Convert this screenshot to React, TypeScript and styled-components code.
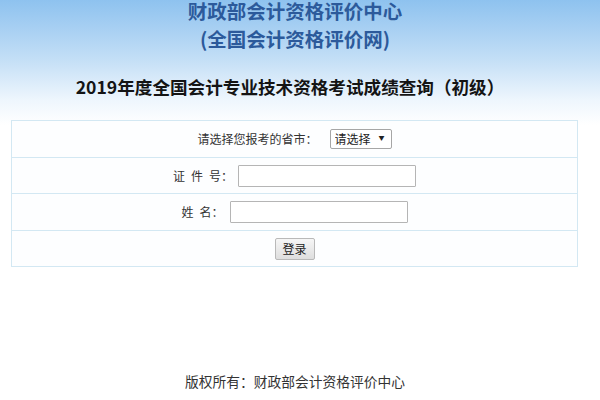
import React from "react";
import styled, { createGlobalStyle } from "styled-components";

const Global = createGlobalStyle`
  html, body { margin: 0; padding: 0; background: #ffffff; }
  body { font-family: "Noto Sans CJK SC", "Noto Sans", sans-serif; width: 600px; height: 400px; overflow: hidden; }
`;

const Page = styled.div`
  width: 600px;
  height: 400px;
  display: flex;
  flex-direction: column;
  background: linear-gradient(to bottom, #8ec2ef 0px, #c4dff6 60px, #eef6fd 100px, #ffffff 125px, #ffffff 400px);
`;

const Header = styled.header`
  display: flex;
  flex-direction: column;
  align-items: center;
  height: 120px;
  padding-right: 10px;
`;

const OrgTitle = styled.div<{ $gap?: number }>`
  font-size: 19.5px;
  line-height: 22px;
  font-weight: 700;
  color: #2c5a9b;
  white-space: nowrap;
  margin-top: ${(p) => p.$gap ?? 0}px;
`;

const Heading = styled.h1`
  margin: 27px 10px 0 0;
  font-size: 17.6px;
  line-height: 20px;
  font-weight: 700;
  color: #141414;
  white-space: nowrap;
`;

const Table = styled.div`
  margin: 0 22px 0 11px;
  border: 1px solid #d3e8f3;
  background: #fdfeff;
  display: flex;
  flex-direction: column;
`;

const Row = styled.div<{ $h: number; $shift?: number }>`
  height: ${(p) => p.$h}px;
  display: flex;
  align-items: center;
  justify-content: center;
  gap: ${(p) => p.$shift ?? 8}px;
  border-top: 1px solid #d3e8f3;
  &:first-child { border-top: none; }
`;

const Label = styled.span`
  font-size: 12px;
  color: #333;
  white-space: pre;
  line-height: 14px;
`;

const SelectWrap = styled.span`
  position: relative;
  display: inline-flex;
`;

const Select = styled.select`
  appearance: none;
  -webkit-appearance: none;
  width: 62px;
  height: 20px;
  border: 1px solid #a6a6a6;
  border-radius: 2px;
  background: #ffffff;
  font-family: "Noto Sans CJK SC", sans-serif;
  font-size: 12px;
  color: #222;
  padding: 0 0 0 4px;
  line-height: 18px;
`;

const Arrow = styled.span`
  position: absolute;
  right: 7px;
  top: 5px;
  font-size: 6px;
  line-height: 8px;
  color: #222;
  pointer-events: none;
`;

const Input = styled.input`
  width: 178px;
  height: 22px;
  box-sizing: border-box;
  border: 1px solid #b5b5b5;
  border-radius: 1px;
  background: #fff;
  padding: 0 3px;
`;

const Button = styled.button`
  width: 40px;
  height: 22px;
  box-sizing: border-box;
  border: 1px solid #b9b9b9;
  border-radius: 2px;
  background: linear-gradient(#f6f6f6, #dedede);
  font-family: "Noto Sans CJK SC", sans-serif;
  font-size: 12px;
  color: #222;
  padding: 0;
`;

const Footer = styled.footer`
  margin-top: 106px;
  text-align: center;
  font-size: 13.75px;
  line-height: 16px;
  color: #333;
  padding-right: 10px;
`;

export default function App() {
  return (
    <Page>
      <Global />
      <Header>
        <OrgTitle>财政部会计资格评价中心</OrgTitle>
        <OrgTitle $gap={6}>(全国会计资格评价网)</OrgTitle>
        <Heading>2019年度全国会计专业技术资格考试成绩查询（初级）</Heading>
      </Header>
      <Table>
        <Row $h={36} $shift={12}>
          <Label>请选择您报考的省市：</Label>
          <SelectWrap>
            <Select defaultValue="">
              <option value="">请选择</option>
            </Select>
            <Arrow>▼</Arrow>
          </SelectWrap>
        </Row>
        <Row $h={35} $shift={5}>
          <Label>{"证\u2002件\u2002号："}</Label>
          <Input />
        </Row>
        <Row $h={36} $shift={6}>
          <Label>{"姓\u2002名："}</Label>
          <Input />
        </Row>
        <Row $h={35}>
          <Button>登录</Button>
        </Row>
      </Table>
      <Footer>版权所有：财政部会计资格评价中心</Footer>
    </Page>
  );
}
